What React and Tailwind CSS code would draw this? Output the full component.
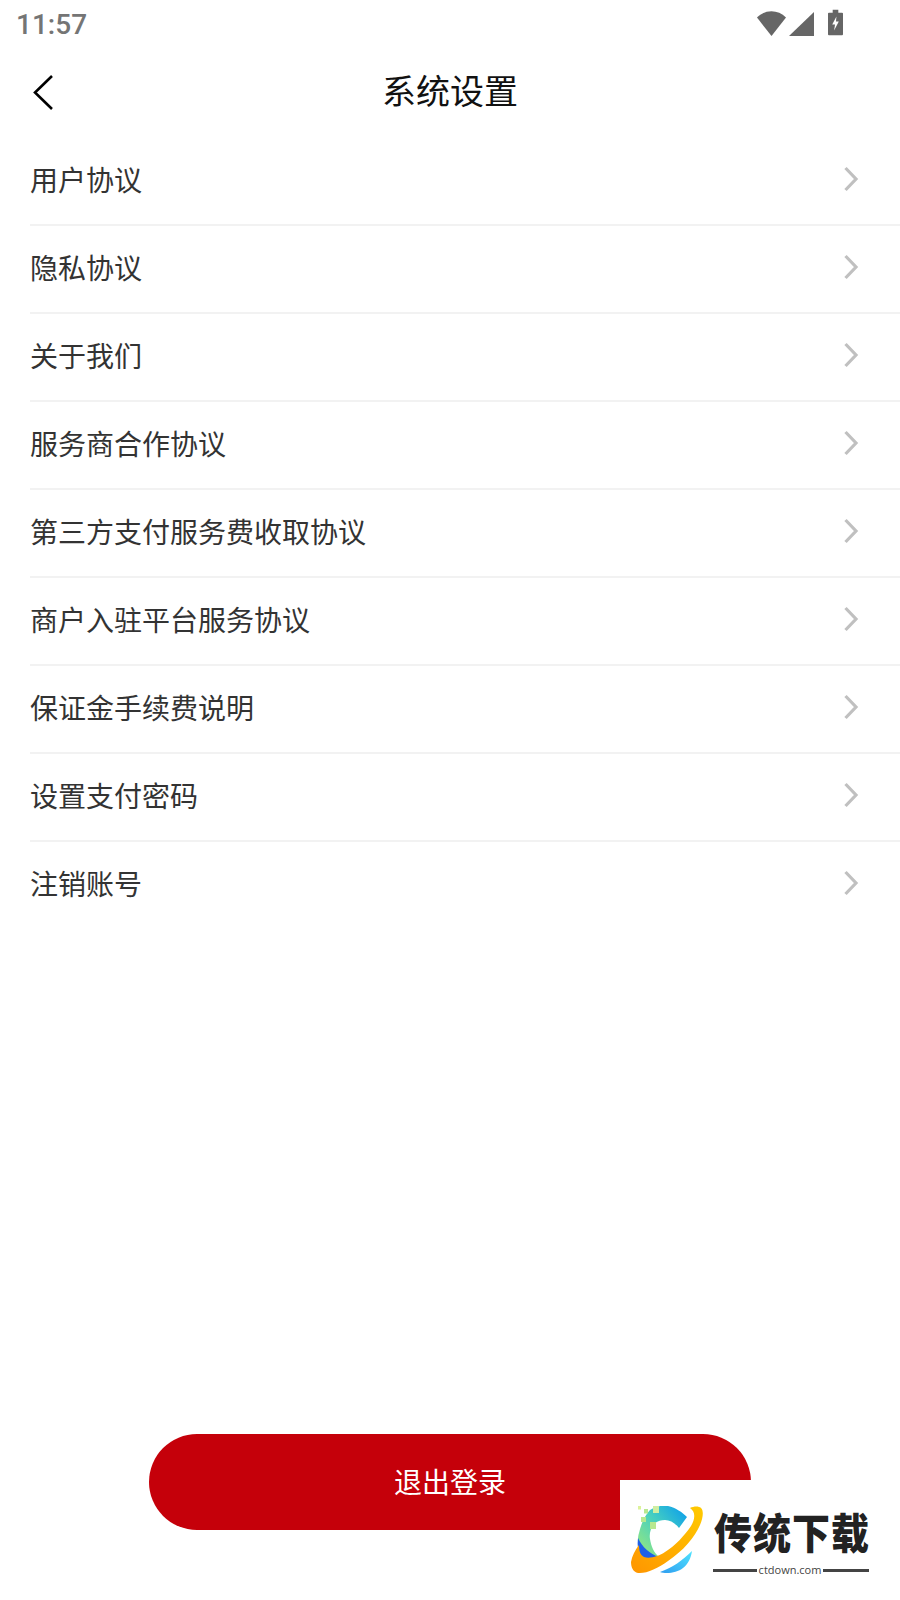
const CJK = "font-['Noto_Sans_CJK_SC','Noto_Sans',sans-serif]";
const rows = ["用户协议","隐私协议","关于我们","服务商合作协议","第三方支付服务费收取协议","商户入驻平台服务协议","保证金手续费说明","设置支付密码","注销账号"];

function Row({ label, last }) {
  return (
    <div className={`h-[88px] ml-[30px] pb-[4px] flex items-center justify-between pr-[41px] border-b-2 ${last ? "border-transparent" : "border-[#f2f2f2]"}`}>
      <span className="text-[28px] leading-none text-[#333333] mt-[-1px]">{label}</span>
      <svg width="16" height="26" viewBox="0 0 16 26" fill="none"><path d="M2.5 2 L13 13 L2.5 24" stroke="#c0c0c0" strokeWidth="3.2" /></svg>
    </div>
  );
}

function Logo() {
  return (
    <div className="absolute left-[620px] top-[1480px] w-[280px] h-[120px] bg-white">
      <div className="absolute left-[11px] top-[26px] w-[72px] h-[68px]">
        <svg width="72" height="68" viewBox="0 0 72 68">
          <defs>
            <linearGradient id="cg" x1="0.9" y1="0.1" x2="0.1" y2="0.8">
              <stop offset="0" stopColor="#14a5e6" />
              <stop offset="0.5" stopColor="#46cfc0" />
              <stop offset="1" stopColor="#86e38c" />
            </linearGradient>
            <linearGradient id="rg" x1="1" y1="0" x2="0" y2="1">
              <stop offset="0" stopColor="#ffca00" />
              <stop offset="1" stopColor="#ff9500" />
            </linearGradient>
            <linearGradient id="lb" x1="1" y1="0" x2="0" y2="1">
              <stop offset="0" stopColor="#4fe3ff" />
              <stop offset="1" stopColor="#2f9df0" />
            </linearGradient>
          </defs>
          <path d="M19 4 C26 0 32 -1 37 0 C45 2 51 6 56 11 L48 22 C44 17 39 14 34 14 C30 14 27 15 24 17 C20 21 18 27 19 33 C20 40 23 47 28 51 L9 50 C7 42 6 33 8 27 C10 18 14 9 19 4 Z" fill="url(#cg)" />
          <path d="M7 32 C11 41 19 48 28 51 L19 53 L10 54 C7 47 6 39 7 32 Z" fill="#1f5fe6" />
          <path d="M29 66 C41 62 52 54 61 45 C60 52 57 58 52 62 C46 67 35 68 29 66 Z" fill="url(#lb)" />
          <path d="M59 2 C63 0 68 0 70 2 C73 5 72 12 69 19 C64 31 52 45 37 55 C27 62 15 68 7 67 C2 66 0 61 0 56 C1 50 4 44 8 39 C8 44 9 49 13 51 C19 53 28 50 34 46 C44 40 54 29 60 20 C64 13 65 6 59 2 Z" fill="url(#rg)" />
          <rect x="7" y="0" width="3" height="3.5" fill="#dcf29a" />
          <rect x="13" y="3" width="4" height="4.5" fill="#b8e890" />
          <rect x="22" y="0" width="6" height="7" fill="#cfeea2" />
          <rect x="10" y="11" width="5" height="5" fill="#b8e890" />
          <rect x="19" y="16" width="6" height="7" fill="#b8e890" />
        </svg>
      </div>
      <div className={`absolute left-[94px] top-[27px] w-[156px] text-center text-[38px] leading-[48px] font-black tracking-[1px] whitespace-nowrap scale-y-[1.12] text-[#222222] ${CJK}`}>传统下载</div>
      <div className="absolute left-[93px] top-[84px] w-[156px] flex items-center justify-between">
        <div className="h-[3px] w-[44px] bg-[#444444]"></div>
        <div className="text-[11px] leading-[12px] text-[#444444] font-['Open_Sans',sans-serif]">ctdown.com</div>
        <div className="h-[3px] w-[46px] bg-[#444444]"></div>
      </div>
    </div>
  );
}

export default function App() {
  return (
    <div className={`relative w-[900px] h-[1600px] bg-white overflow-hidden ${CJK}`}>
      <div className="h-[50px] flex items-start justify-between pl-[16px] pr-[57px]">
        <span className="mt-[8px] text-[28px] leading-[34px] font-medium text-[#757575] font-['Roboto',sans-serif]">11:57</span>
        <div className="mt-[9px] flex items-start">
          <svg width="29" height="25" viewBox="0 0 29 25" className="mt-[2px]"><path d="M0 6.5 C8 -2 21 -2 29 6.5 L14.5 25 Z" fill="#666666" /></svg>
          <svg width="25" height="24" viewBox="0 0 25 24" className="ml-[3px] mt-[3px]"><path d="M0 24 L25 0 L25 24 Z" fill="#666666" /></svg>
          <svg width="15" height="27" viewBox="0 0 16 27" className="ml-[14px]"><path d="M5 0 H11 V3 H15 C15.6 3 16 3.4 16 4 V26 C16 26.6 15.6 27 15 27 H1 C0.4 27 0 26.6 0 26 V4 C0 3.4 0.4 3 1 3 H5 Z" fill="#666666" /><path d="M9 7 L4.5 15.5 H7.5 L6.5 22 L11.5 12.5 H8.5 Z" fill="#ffffff" /></svg>
        </div>
      </div>
      <div className="relative h-[88px] flex items-start justify-center">
        <svg className="absolute left-[32px] top-[24px]" width="24" height="36" viewBox="0 0 24 36" fill="none"><path d="M20 2 L3 18.5 L20 35" stroke="#000000" strokeWidth="2.6" /></svg>
        <span className="text-[34px] leading-none text-[#111111] mt-[23px]">系统设置</span>
      </div>
      <div>
        {rows.map((r, i) => <Row key={r} label={r} last={i === rows.length - 1} />)}
      </div>
      <div className="absolute left-[149px] top-[1434px] w-[602px] h-[96px] pb-[2px] rounded-[48px] bg-[#c5000a] flex items-center justify-center">
        <span className="text-[28px] leading-none text-white">退出登录</span>
      </div>
      <Logo />
    </div>
  );
}
